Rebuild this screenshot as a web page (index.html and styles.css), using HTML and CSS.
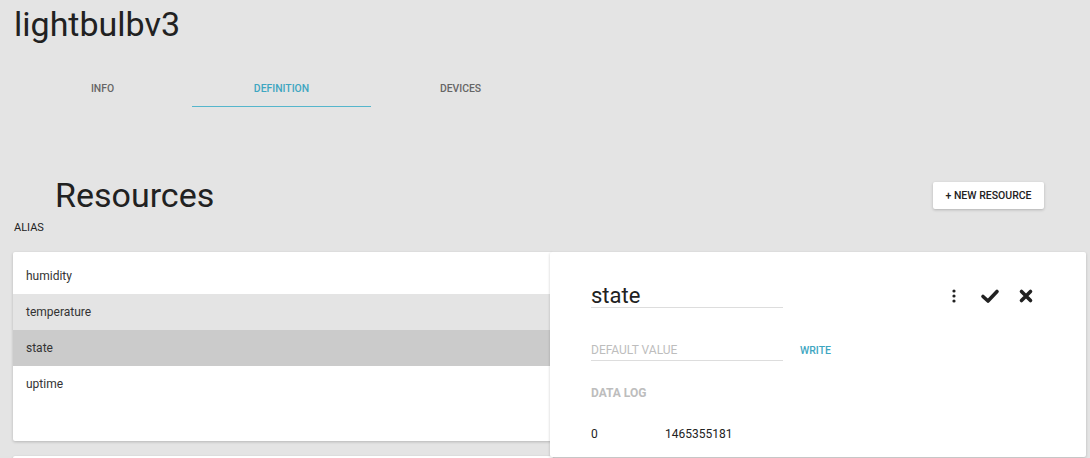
FILE: index.html
```html
<!DOCTYPE html>
<html>
<head>
<meta charset="utf-8">
<link rel="stylesheet" href="styles.css">
</head>
<body>
<div class="page">
  <h1 class="title">lightbulbv3</h1>
  <nav class="tabs">
    <div class="tab">INFO</div>
    <div class="tab active">DEFINITION</div>
    <div class="tab">DEVICES</div>
  </nav>
  <div class="section-head">
    <h2 class="section-title">Resources</h2>
    <button class="btn">+ NEW RESOURCE</button>
  </div>
  <div class="alias">ALIAS</div>
  <div class="content">
    <div class="left-col">
      <div class="card list">
        <div class="row">humidity</div>
        <div class="row hover">temperature</div>
        <div class="row selected">state</div>
        <div class="row">uptime</div>
      </div>
      <div class="card next"></div>
    </div>
    <div class="card detail">
      <div class="detail-head">
        <div class="name-field">state</div>
        <div class="icons">
          <span class="icon">
            <svg width="24" height="24" viewBox="0 0 24 24"><circle cx="12" cy="7" r="1.6" fill="#222"/><circle cx="12" cy="12" r="1.6" fill="#222"/><circle cx="12" cy="17" r="1.6" fill="#222"/></svg>
          </span>
          <span class="icon">
            <svg width="24" height="24" viewBox="0 0 24 24"><polyline points="5,12.5 10,17 19,7.5" fill="none" stroke="#222" stroke-width="3.6" stroke-linecap="round" stroke-linejoin="round"/></svg>
          </span>
          <span class="icon">
            <svg width="24" height="24" viewBox="0 0 24 24"><path d="M7.5 7.5 L16.5 16.5 M16.5 7.5 L7.5 16.5" fill="none" stroke="#222" stroke-width="3.6" stroke-linecap="round"/></svg>
          </span>
        </div>
      </div>
      <div class="value-row">
        <div class="value-field">DEFAULT VALUE</div>
        <span class="write">WRITE</span>
      </div>
      <div class="log-title">DATA LOG</div>
      <div class="log-row">
        <span class="log-val">0</span>
        <span class="log-time">1465355181</span>
      </div>
    </div>
  </div>
</div>
</body>
</html>
```
FILE: styles.css
```css
html, body {
  margin: 0;
  padding: 0;
  background: #e4e4e4;
  font-family: Roboto, "Noto Sans", Arial, sans-serif;
  color: #212121;
  overflow: hidden;
  height: 458px;
}
.page {
  padding: 4px 4px 0 13px;
}
.title {
  margin: 0;
  padding-left: 1px;
  font-size: 34px;
  line-height: 40px;
  font-weight: 400;
  color: #212121;
}
.tabs {
  display: flex;
  margin-top: 26px;
}
.tab {
  width: 179px;
  height: 35px;
  line-height: 37px;
  text-align: center;
  font-size: 10.4px;
  font-weight: 500;
  color: #666;
  border-bottom: 2px solid transparent;
}
.tab.active {
  color: #3ea6c1;
  border-bottom: 1px solid #55b6cc;
  height: 36px;
}
.section-head {
  display: flex;
  align-items: center;
  justify-content: space-between;
  margin-top: 68px;
  height: 40px;
}
.section-title {
  margin: 0 0 0 42px;
  font-size: 34px;
  line-height: 40px;
  font-weight: 400;
  color: #212121;
}
.btn {
  margin-right: 42px;
  height: 27px;
  width: 111px;
  border: none;
  border-radius: 2px;
  background: #fff;
  box-shadow: 0 1px 3px rgba(0,0,0,0.22);
  font-family: Roboto, Arial, sans-serif;
  font-size: 10.5px;
  font-weight: 500;
  color: #222;
  padding: 0;
}
.alias {
  margin-top: 6px;
  font-size: 11px;
  line-height: 14px;
  color: #222;
  padding-left: 1px;
}
.content {
  display: flex;
  align-items: flex-start;
  margin-top: 17px;
}
.card {
  background: #fff;
  border-radius: 2px;
  box-shadow: 0 1px 3px rgba(0,0,0,0.2);
}
.left-col {
  width: 540px;
  margin-right: -3px;
  display: flex;
  flex-direction: column;
}
.list {
  padding: 6px 0 39px;
}
.row {
  height: 36px;
  line-height: 36px;
  padding-left: 13px;
  font-size: 12px;
  color: #333;
}
.row.hover { background: #e4e4e4; }
.row.selected { background: #cbcbcb; }
.next {
  margin-top: 15px;
  height: 30px;
}
.detail {
  position: relative;
  width: 536px;
  height: 205px;
  box-sizing: border-box;
  padding: 32px 48px 0 41px;
}
.detail-head {
  display: flex;
  align-items: center;
}
.name-field {
  width: 192px;
  font-size: 22px;
  line-height: 22px;
  color: #212121;
  border-bottom: 1px solid #ddd;
}
.icons {
  margin-left: auto;
  display: flex;
  gap: 12px;
}
.icon {
  width: 24px;
  height: 24px;
  display: block;
}
.icon svg { display: block; }
.value-row {
  display: flex;
  align-items: flex-end;
  margin-top: 34px;
}
.value-field {
  width: 192px;
  font-size: 12px;
  line-height: 16px;
  padding-bottom: 2px;
  color: #bdbdbd;
  border-bottom: 1px solid #ddd;
}
.write {
  margin-left: 17px;
  font-size: 10.5px;
  font-weight: 500;
  color: #3ea6c1;
  line-height: 16px;
  padding-bottom: 2px;
}
.log-title {
  margin-top: 24px;
  font-size: 12px;
  line-height: 16px;
  font-weight: 700;
  color: #bdbdbd;
}
.log-row {
  display: flex;
  margin-top: 25px;
  font-size: 12px;
  line-height: 16px;
  color: #222;
}
.log-val { width: 74px; }
```
